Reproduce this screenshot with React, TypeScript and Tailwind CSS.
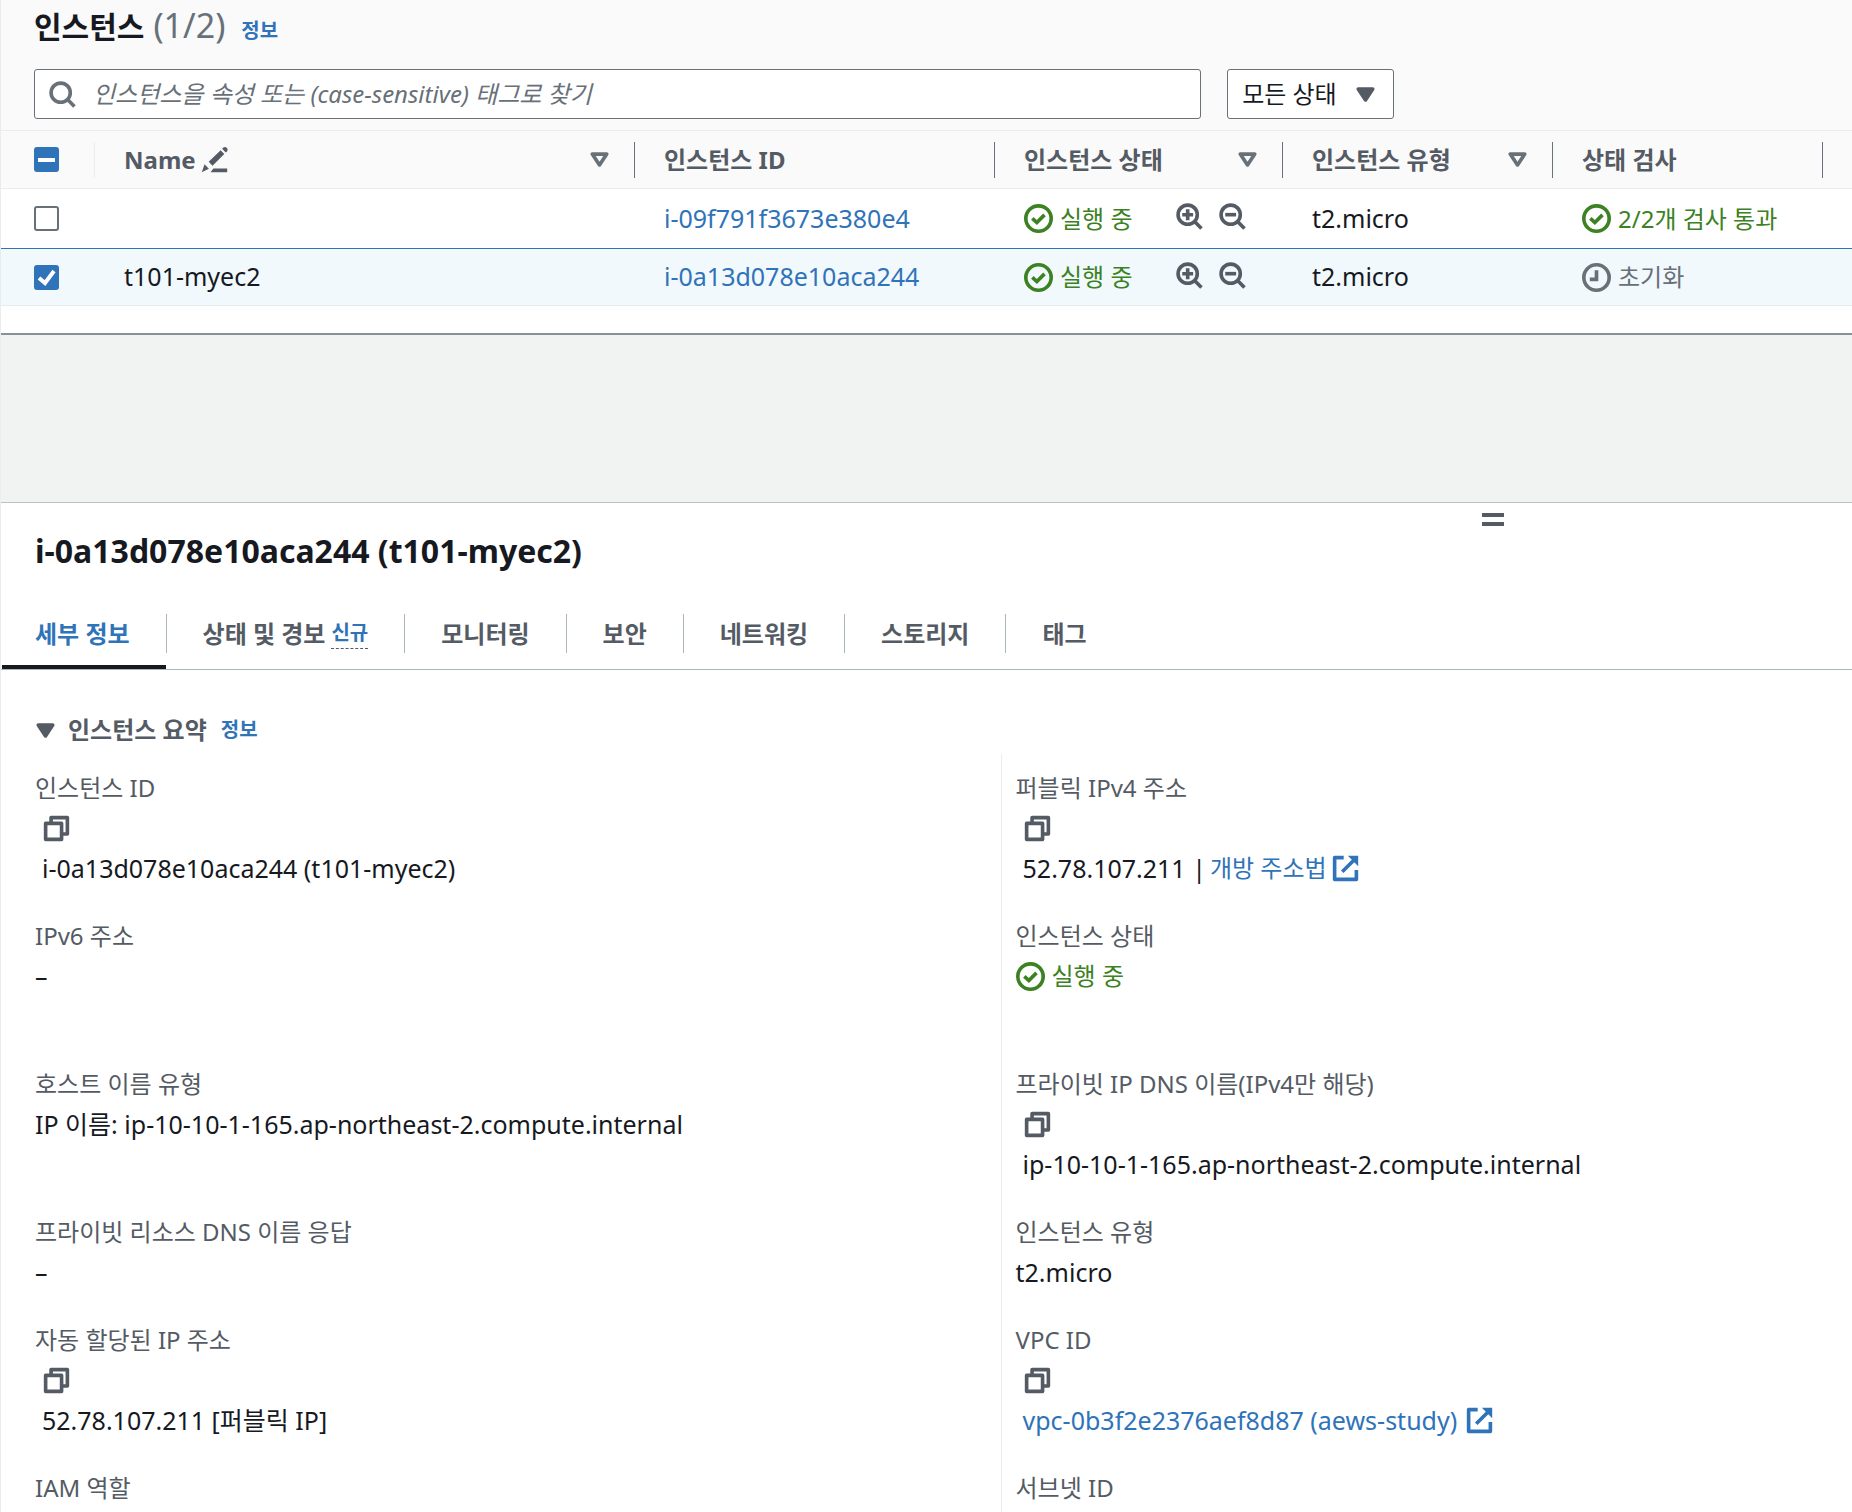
import type { ReactNode } from "react";
import clsx from "clsx";

function Icon({ children, className }: { children: ReactNode; className?: string }) {
  return (
    <svg
      viewBox="0 0 16 16"
      fill="none"
      stroke="currentColor"
      strokeWidth="2"
      strokeLinejoin="round"
      className={clsx("h-[29px] w-[29px] shrink-0", className)}
      aria-hidden="true"
    >
      {children}
    </svg>
  );
}

const CheckCircle = () => (
  <Icon>
    <circle cx="8" cy="8" r="7" />
    <path d="M4.6 7.9l2.5 2.3 4.2-4.2" strokeLinejoin="miter" />
  </Icon>
);

const Clock = () => (
  <Icon>
    <circle cx="8" cy="8" r="7" />
    <path d="M8 4v5H4.3" strokeLinejoin="miter" />
  </Icon>
);

const Caret = ({ filled }: { filled?: boolean }) => (
  <Icon>
    <path d="M4 5h8l-4 6z" fill={filled ? "currentColor" : "none"} />
  </Icon>
);

const Magnifier = ({ children }: { children?: ReactNode }) => (
  <Icon>
    <circle cx="7" cy="7" r="5.3" />
    <path d="M10.8 10.8l3.8 3.8" />
    {children}
  </Icon>
);

const Copy = () => (
  <Icon>
    <path d="M2 5.2h8.8V14H2z" />
    <path d="M5 5V2h9v9h-3" />
  </Icon>
);

const External = () => (
  <Icon>
    <path d="M14 8.8V14H2V2h5M6.2 9.8L13 3" />
    <path d="M9.3 1H15v5.7z" fill="currentColor" stroke="none" />
  </Icon>
);

const Pencil = () => (
  <svg viewBox="0 0 16 16" fill="currentColor" className="h-[29px] w-[29px] shrink-0" aria-hidden="true">
    <path d="M12.9 1.4a1.5 1.5 0 0 1 2 2.2l-.7.6-2-2.1zM11.4 2.9l2 2.1-6.5 6.4-2.1-2.1zM2.5 10.6l2.4 2.5L1 15zM7.4 13H15v2H5.8z" />
  </svg>
);

function Checkbox({ label, checked, mixed }: { label: string; checked?: boolean; mixed?: boolean }) {
  return (
    <div className="relative h-[25px] w-[25px]">
      <input
        type="checkbox"
        aria-label={label}
        defaultChecked={checked}
        className="peer block h-[25px] w-[25px] appearance-none rounded-[3px] border-2 border-[#687078] bg-white checked:border-[#2f73b9] checked:bg-[#2f73b9]"
      />
      <svg
        viewBox="0 0 25 25"
        fill="none"
        stroke="white"
        strokeWidth="4"
        className="pointer-events-none absolute inset-0 hidden h-[25px] w-[25px] peer-checked:block"
        aria-hidden="true"
      >
        <path d={mixed ? "M4 13h17" : "M5 13l6 5 9-12"} />
      </svg>
    </div>
  );
}

const link = "text-[#2f73b9] hover:underline";

const headers = [
  { label: "Name", edit: true, sort: true },
  { label: "인스턴스 ID" },
  { label: "인스턴스 상태", sort: true },
  { label: "인스턴스 유형", sort: true },
  { label: "상태 검사" },
];

const instances = [
  { id: "i-09f791f3673e380e4", name: "", type: "t2.micro", check: "2/2개 검사 통과", passed: true, selected: false },
  { id: "i-0a13d078e10aca244", name: "t101-myec2", type: "t2.micro", check: "초기화", passed: false, selected: true },
];

const tabs = ["세부 정보", "상태 및 경보", "모니터링", "보안", "네트워킹", "스토리지", "태그"];

function Running() {
  return (
    <span className="flex items-center gap-[7px] text-[24px] text-[#3c8122]">
      <CheckCircle />
      실행 중
    </span>
  );
}

function InstanceTable() {
  return (
    <table className="w-full table-fixed border-collapse text-left">
      <colgroup>
        <col className="w-[93px]" />
        <col />
        <col className="w-[360px]" />
        <col className="w-[288px]" />
        <col className="w-[270px]" />
        <col className="w-[270px]" />
        <col className="w-[30px]" />
      </colgroup>
      <thead className="bg-[#fafafa] text-[24px] text-[#545b64]">
        <tr className="h-[58px] border-y border-[#eaeded]">
          <th className="pl-[33px]">
            <Checkbox label="모두 선택" checked mixed />
          </th>
          {headers.map((h, i) => (
            <th key={h.label} className="p-0">
              <div
                className={clsx(
                  "flex h-9 items-center border-l pr-[20px] pl-[29px]",
                  i === 0 ? "border-[#eaeded]" : "border-[#687078]",
                )}
              >
                <span>{h.label}</span>
                {h.edit && (
                  <span className="ml-1">
                    <Pencil />
                  </span>
                )}
                {h.sort && (
                  <button type="button" aria-label={h.label + " 정렬"} className="ml-auto text-[#687078]">
                    <Caret />
                  </button>
                )}
              </div>
            </th>
          ))}
          <td className="p-0">
            <div className="h-9 border-l border-[#687078]"></div>
          </td>
        </tr>
      </thead>
      <tbody className="text-[25px] text-[#16191f]">
        {instances.map((row) => (
          <tr
            key={row.id}
            className={clsx(
              "border-b",
              row.selected
                ? "h-[57px] border-t border-t-[#2f73b9] border-b-[#e6eaed] bg-[#f2f9fd]"
                : "h-[60px] bg-white border-[#2f73b9]",
            )}
          >
            <td className="pl-[33px]">
              <Checkbox label={row.id + " 선택"} checked={row.selected} />
            </td>
            <td className="pl-[30px]">{row.name}</td>
            <td className="pl-[30px]">
              <a href="#" className={link}>{row.id}</a>
            </td>
            <td className="pl-[30px]">
              <div className="flex items-center">
                <Running />
                <div className="mb-1 ml-auto flex gap-[14px] pr-[35px] text-[#545b64]">
                  <button type="button" aria-label="필터에 추가">
                    <Magnifier>
                      <path d="M7 4v6M4 7h6" />
                    </Magnifier>
                  </button>
                  <button type="button" aria-label="필터에서 제외">
                    <Magnifier>
                      <path d="M4 7h6" />
                    </Magnifier>
                  </button>
                </div>
              </div>
            </td>
            <td className="pl-[30px]">{row.type}</td>
            <td className="pl-[30px]" colSpan={2}>
              <span
                className={clsx(
                  "flex items-center gap-[7px] text-[24px]",
                  row.passed ? "text-[#3c8122]" : "text-[#687078]",
                )}
              >
                {row.passed ? <CheckCircle /> : <Clock />}
                {row.check}
              </span>
            </td>
          </tr>
        ))}
      </tbody>
    </table>
  );
}

function Field({ label, copy, children }: { label: string; copy?: boolean; children?: ReactNode }) {
  return (
    <div className="leading-10">
      <dt className="text-[24px] text-[#545b64]">{label}</dt>
      <dd className="text-[25px] text-[#16191f]">
        {copy && (
          <button type="button" aria-label={label + " 복사"} className="flex h-10 items-center pl-[7px] text-[#545b64]">
            <Copy />
          </button>
        )}
        <div className={clsx("flex h-10 items-center", copy && "pl-[7px]")}>{children}</div>
      </dd>
    </div>
  );
}

function Details() {
  return (
    <div className="flex">
      <dl className="grid w-[54%] grid-rows-[120px_120px_120px_80px_120px_80px] gap-y-7 pt-[14px] pl-[34px]">
        <Field label="인스턴스 ID" copy>i-0a13d078e10aca244 (t101-myec2)</Field>
        <Field label="IPv6 주소">–</Field>
        <Field label="호스트 이름 유형">IP 이름: ip-10-10-1-165.ap-northeast-2.compute.internal</Field>
        <Field label="프라이빗 리소스 DNS 이름 응답">–</Field>
        <Field label="자동 할당된 IP 주소" copy>52.78.107.211 [퍼블릭 IP]</Field>
        <Field label="IAM 역할" />
      </dl>
      <dl className="grid flex-1 grid-rows-[120px_120px_120px_80px_120px_80px] gap-y-7 border-l border-[#eaeded] pt-[14px] pl-[14px]">
        <Field label="퍼블릭 IPv4 주소" copy>
          <span>52.78.107.211 |</span>
          <a href="#" className={clsx(link, "ml-1 flex items-center gap-1 text-[24px]")}>
            개방 주소법 <External />
          </a>
        </Field>
        <Field label="인스턴스 상태">
          <Running />
        </Field>
        <Field label="프라이빗 IP DNS 이름(IPv4만 해당)" copy>ip-10-10-1-165.ap-northeast-2.compute.internal</Field>
        <Field label="인스턴스 유형">t2.micro</Field>
        <Field label="VPC ID" copy>
          <a href="#" className={clsx(link, "flex items-center gap-2")}>
            vpc-0b3f2e2376aef8d87 (aews-study) <External />
          </a>
        </Field>
        <Field label="서브넷 ID" />
      </dl>
    </div>
  );
}

export default function App() {
  return (
    <div className="h-screen overflow-hidden border-l border-[#eaeded] bg-white font-['Noto_Sans','Noto_Sans_CJK_KR',sans-serif]">
      <section>
        <div className="bg-[#fafafa] pb-[11px] pl-[33px]">
          <div className="flex h-[50px] items-baseline leading-[50px]">
            <h1 className="text-[30px] font-bold text-[#16191f]">인스턴스</h1>
            <span className="ml-[9px] text-[34px] text-[#687078]">(1/2)</span>
            <a href="#" className={clsx(link, "ml-4 text-[20px] font-bold")}>정보</a>
          </div>
          <div className="mt-[19px] flex gap-[26px]">
            <div className="relative w-[64.2%]">
              <span className="absolute top-[11px] left-[14px] text-[#687078]">
                <Magnifier />
              </span>
              <input
                type="search"
                aria-label="인스턴스 찾기"
                placeholder="인스턴스을 속성 또는 (case-sensitive) 태그로 찾기"
                className="block h-[50px] w-full rounded-[3px] border border-[#687078] bg-white pb-[2px] pl-[58px] text-[24px] placeholder:text-[#687078] placeholder:italic"
              />
            </div>
            <div className="relative">
              <select
                aria-label="상태 필터"
                className="block h-[50px] w-[167px] appearance-none rounded-[3px] border border-[#687078] bg-white pl-[14px] text-[24px] text-[#16191f]"
              >
                <option>모든 상태</option>
              </select>
              <span className="pointer-events-none absolute top-[11px] right-[14px] text-[#545b64]">
                <Caret filled />
              </span>
            </div>
          </div>
        </div>
        <InstanceTable />
      </section>

      <div className="mt-[27px] h-[170px] border-t-2 border-b border-t-[#879196] border-b-[#b9c1c4] bg-[#f1f3f3]"></div>

      <section>
        <button type="button" aria-label="패널 크기 조정" className="mt-[10px] ml-[80%] flex w-[22px] flex-col gap-[5px]">
          <span className="h-1 w-full bg-[#545b64]"></span>
          <span className="h-1 w-full bg-[#545b64]"></span>
        </button>
        <h2 className="pl-[34px] text-[32px] leading-[50px] font-bold text-[#16191f]">
          i-0a13d078e10aca244 (t101-myec2)
        </h2>

        <div role="tablist" className="mt-[21px] flex border-b border-[#aab7b8] pl-px">
          {tabs.map((tab, i) => (
            <div
              key={tab}
              className={clsx(
                "flex h-[72px] flex-col border-b-4 pt-[17px]",
                i === 0 ? "border-[#16191f] text-[#2f73b9]" : "border-transparent text-[#545b64]",
              )}
            >
              <button
                type="button"
                role="tab"
                aria-selected={i === 0}
                className={clsx(
                  "flex h-[39px] items-center px-9 text-[24px] font-bold whitespace-nowrap",
                  i === 0 ? "pl-[33px]" : "border-l border-[#aab7b8]",
                )}
              >
                {tab}
                {i === 1 && (
                  <span className="ml-[6px] border-b border-dashed border-[#545b64] text-[20px] leading-[30px] text-[#2f73b9]">
                    신규
                  </span>
                )}
              </button>
            </div>
          ))}
        </div>

        <div className="mt-[36px] flex h-12 items-center pl-[30px]">
          <button type="button" className="flex items-center gap-2 text-[24px] font-bold text-[#545b64]">
            <Caret filled />
            인스턴스 요약
          </button>
          <a href="#" className={clsx(link, "ml-[14px] text-[20px] font-bold")}>정보</a>
        </div>

        <Details />
      </section>
    </div>
  );
}
